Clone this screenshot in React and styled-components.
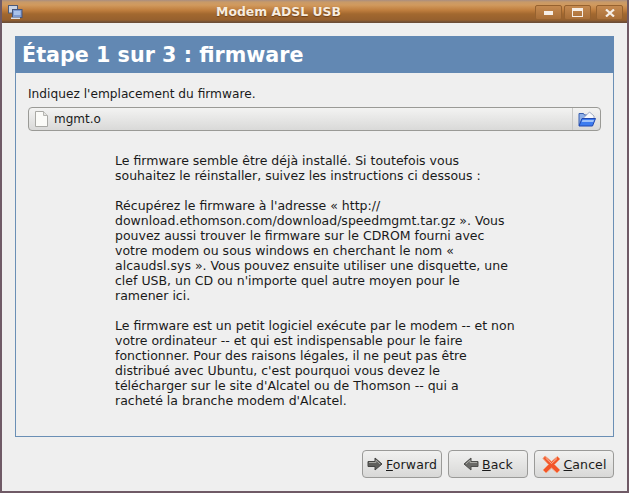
import React from "react";
import styled, { createGlobalStyle } from "styled-components";

const Global = createGlobalStyle`
	html, body { margin: 0; padding: 0; background: #efefef; }
	body { font-family: "DejaVu Sans", sans-serif; }
`;

const paragraphs = [
	[
		"Le firmware semble être déjà installé. Si toutefois vous",
		"souhaitez le réinstaller, suivez les instructions ci dessous :",
	],
	[
		"Récupérez le firmware à l'adresse « http://",
		"download.ethomson.com/download/speedmgmt.tar.gz ». Vous",
		"pouvez aussi trouver le firmware sur le CDROM fourni avec",
		"votre modem ou sous windows en cherchant le nom «",
		"alcaudsl.sys ». Vous pouvez ensuite utiliser une disquette, une",
		"clef USB, un CD ou n'importe quel autre moyen pour le",
		"ramener ici.",
	],
	[
		"Le firmware est un petit logiciel exécute par le modem -- et non",
		"votre ordinateur -- et qui est indispensable pour le faire",
		"fonctionner. Pour des raisons légales, il ne peut pas être",
		"distribué avec Ubuntu, c'est pourquoi vous devez le",
		"télécharger sur le site d'Alcatel ou de Thomson -- qui a",
		"racheté la branche modem d'Alcatel.",
	],
];

const ForwardIcon = () => (
	<svg width="16" height="14" viewBox="0 0 16 14">
		<path d="M1 4.500h7V1l7 6-7 6V9.500H1z" fill="#5f5f5c" stroke="#444442" strokeWidth="1" strokeLinejoin="round" />
		<path d="M2 5.500h7V3.200L13 7" fill="none" stroke="#a5a5a0" strokeWidth="1" />
	</svg>
);

const BackIcon = () => (
	<svg width="16" height="14" viewBox="0 0 16 14">
		<path d="M15 4.500H8V1L1 7l7 6V9.500h7z" fill="#6a6a67" stroke="#4f4f4d" strokeWidth="1" strokeLinejoin="round" />
		<path d="M14 5.500H7V3.200L3 7" fill="none" stroke="#a9a9a4" strokeWidth="1" />
	</svg>
);

const CancelIcon = () => (
	<svg width="19" height="19" viewBox="0 0 19 19">
		<path d="M3 1l6.500 5.500L15.500 1.500 18 4l-5.500 5.500L18 15l-3 3-5.500-5L4 18l-3-3 5.500-5.500L1 3.500z" fill="#f2562a" stroke="#f4a27d" strokeWidth="1" strokeLinejoin="round" />
		<path d="M3.500 3l6 5.500L15 3.500" fill="none" stroke="#fbb496" strokeWidth="1" />
	</svg>
);

const FileIcon = () => (
	<svg width="15" height="18" viewBox="0 0 15 18">
		<path d="M1.500 1.500h8l4 4v11h-12z" fill="#fbfbf8" stroke="#a9a9a5" strokeWidth="1" strokeLinejoin="round" />
		<path d="M9.500 1.500v4h4" fill="#e4e4e0" stroke="#b5b5b1" strokeWidth="1" />
	</svg>
);

const FolderIcon = () => (
	<svg width="18" height="16" viewBox="0 0 18 16">
		<path d="M1 2.500h4.500l1 1.500H9v10.500H1z" fill="#8fb0e8" stroke="#3a5fae" strokeWidth="1" />
		<path d="M5 7.500L11.500 1 16 5v3z" fill="#f8f9fc" stroke="#8d9ab8" strokeWidth="0.800" />
		<path d="M4 7.500h13.500l-3 7.500H1z" fill="#3d7cf0" stroke="#2148b0" strokeWidth="1" strokeLinejoin="round" />
		<path d="M4.500 9h11.500l-.8 2H3.700z" fill="#9fc2fa" />
	</svg>
);

const WindowIcon = () => (
	<svg width="16" height="16" viewBox="0 0 16 16">
		<rect x="1.500" y="1.500" width="9" height="7.500" fill="#c9d3e4" stroke="#4c5a78" />
		<rect x="5.500" y="5.500" width="9.500" height="8" fill="#7d9ad0" stroke="#46557a" />
		<rect x="7" y="7" width="6.500" height="4" fill="#a9c2ea" />
		<rect x="4" y="13.500" width="9" height="1.500" fill="#d8dde6" />
	</svg>
);

const App = () => {
	return (
		<>
			<Global />
			<Window>
				<TitleBar>
					<TitleIcon><WindowIcon /></TitleIcon>
					<Title>Modem ADSL USB</Title>
					<Controls>
						<Control>
							<svg width="9" height="4" viewBox="0 0 9 4"><rect width="9" height="4" fill="#f6eee6" /></svg>
						</Control>
						<Control>
							<svg width="11" height="9" viewBox="0 0 11 9"><rect x="0.500" y="0.500" width="10" height="8" fill="none" stroke="#f6eee6" /><rect width="11" height="3" fill="#f6eee6" /></svg>
						</Control>
						<Control $wide>
							<svg width="10" height="8" viewBox="0 0 10 8"><path d="M1 0.500l8 7M9 0.500l-8 7" stroke="#f6eee6" strokeWidth="2.200" /></svg>
						</Control>
					</Controls>
				</TitleBar>
				<Body>
					<Panel>
						<Header>Étape 1 sur 3 : firmware</Header>
						<PanelBody>
							<Label>Indiquez l'emplacement du firmware.</Label>
							<FileChooser>
								<FileName>
									<FileIcon />
									<span>mgmt.o</span>
								</FileName>
								<ChooserButton><FolderIcon /></ChooserButton>
							</FileChooser>
							<Notes>
								{paragraphs.map((lines) => (
									<Paragraph key={lines[0]}>
										{lines.map((line) => (
											<Line key={line}>{line}</Line>
										))}
									</Paragraph>
								))}
							</Notes>
						</PanelBody>
					</Panel>
					<Actions>
						<Button>
							<ForwardIcon />
							<span><u>F</u>orward</span>
						</Button>
						<Button>
							<BackIcon />
							<span><u>B</u>ack</span>
						</Button>
						<Button>
							<CancelIcon />
							<span><u>C</u>ancel</span>
						</Button>
					</Actions>
				</Body>
			</Window>
		</>
	);
};

const Window = styled.div`
	width: 629px;
	height: 493px;
	box-sizing: border-box;
	display: flex;
	flex-direction: column;
	overflow: hidden;
	background: #efefef;
	border: solid #6f5a66;
	border-width: 0 2px 2px 2px;
	color: #1a1a1a;
`;

const TitleBar = styled.div`
	position: relative;
	height: 23px;
	flex: none;
	margin: 0 -2px;
	padding-right: 72px;
	display: flex;
	align-items: center;
	justify-content: center;
	background: linear-gradient(#a98d80 0, #c89a68 2px, #d19a5e 5px, #c07f3f 10px, #a2682f 14px, #96602e 20px, #704f36 22px, #6b4b35 23px);
`;

const TitleIcon = styled.div`
	position: absolute;
	left: 7px;
	top: 4px;
	display: flex;
`;

const Title = styled.div`
	font-size: 12.4px;
	font-weight: bold;
	color: #f7ecdf;
	text-shadow: 0 1px 1px rgba(80, 40, 10, 0.6);
`;

const Controls = styled.div`
	position: absolute;
	right: 6px;
	top: 5px;
	display: flex;
	gap: 2px;
`;

const Control = styled.div`
	width: 27px;
	height: 15px;
	margin-left: ${(p) => (p.$wide ? "3px" : "0")};
	box-sizing: border-box;
	display: flex;
	align-items: center;
	justify-content: center;
	border: 1px solid #96622f;
	border-radius: 2px;
	background: linear-gradient(#c58a50, #a96f38);
`;

const Body = styled.div`
	flex: 1;
	display: flex;
	flex-direction: column;
	padding: 13px;
`;

const Panel = styled.div`
	height: 401px;
	flex: none;
	box-sizing: border-box;
	display: flex;
	flex-direction: column;
	border: 1px solid #6a8fb5;
	border-top: none;
`;

const Header = styled.div`
	height: 37px;
	flex: none;
	margin: 0 -1px;
	padding-left: 7px;
	display: flex;
	align-items: center;
	background: #6288b3;
	color: #fff;
	font-size: 20.7px;
	font-weight: bold;
`;

const PanelBody = styled.div`
	padding: 14px 12px 0 12px;
`;

const Label = styled.div`
	font-size: 12.2px;
	line-height: 15px;
	margin-bottom: 5px;
`;

const FileChooser = styled.div`
	height: 24px;
	box-sizing: border-box;
	display: flex;
	align-items: center;
	border: 1px solid #9a9a96;
	border-radius: 4px;
	background: linear-gradient(#f3f3f2, #d9d9d8);
`;

const FileName = styled.div`
	flex: 1;
	display: flex;
	align-items: center;
	gap: 5px;
	padding-left: 5px;
	font-size: 12px;
`;

const ChooserButton = styled.div`
	width: 28px;
	height: 22px;
	box-sizing: border-box;
	display: flex;
	align-items: center;
	justify-content: center;
	border-left: 1px solid #c8c8c6;
`;

const Notes = styled.div`
	padding: 22px 0 0 87px;
	display: flex;
	flex-direction: column;
	gap: 15px;
`;

const Paragraph = styled.p`
	margin: 0;
`;

const Line = styled.div`
	font-size: 12.5px;
	line-height: 15px;
	white-space: nowrap;
`;

const Actions = styled.div`
	margin-top: 13px;
	display: flex;
	justify-content: flex-end;
	gap: 6px;
`;

const Button = styled.div`
	width: 80px;
	height: 28px;
	box-sizing: border-box;
	display: flex;
	align-items: center;
	justify-content: center;
	gap: 3px;
	border: 1px solid #9a9a98;
	border-radius: 4px;
	background: linear-gradient(#f1f1f0, #d8d8d7);
	font-size: 12.5px;
	letter-spacing: 0.1px;
`;

export default App;
